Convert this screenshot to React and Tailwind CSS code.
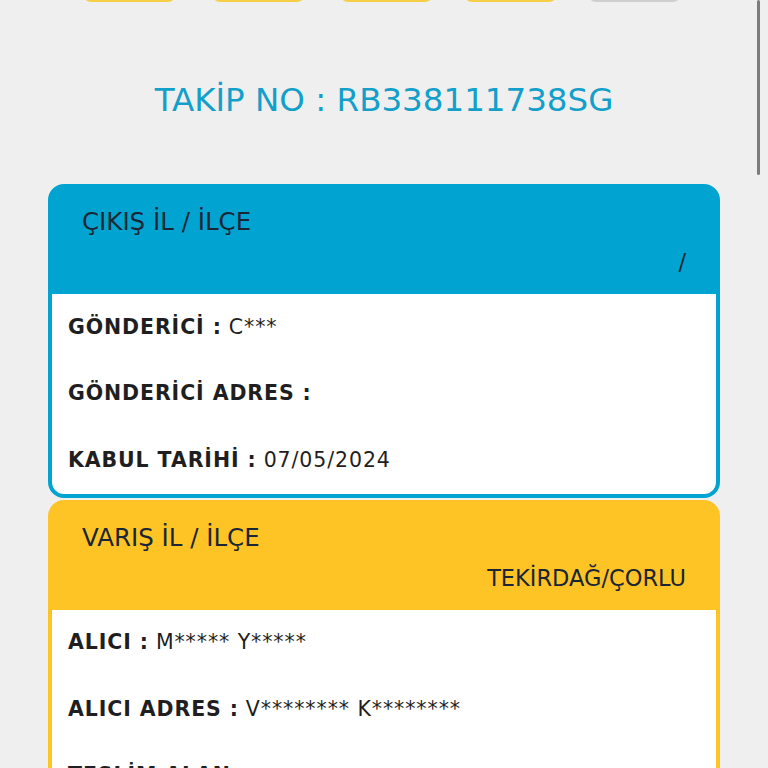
import React from "react";

const topButtons = [
  { ml: "ml-[83px]", color: "border-[#f7cf45] bg-[#f4f0e4]" },
  { ml: "ml-[36px]", color: "border-[#f7cf45] bg-[#f4f0e4]" },
  { ml: "ml-[35px]", color: "border-[#f7cf45] bg-[#f4f0e4]" },
  { ml: "ml-[31px]", color: "border-[#f7cf45] bg-[#f4f0e4]" },
  { ml: "ml-[31px]", color: "border-[#cfcfcf] bg-[#f2f2f2]" },
];

const Row = ({ label, value }) => (
  <div className="h-[66.5px] flex items-center pl-[16px] text-[20.5px] tracking-[0.9px] text-[#1f1f21]">
    <span className="font-bold">{label}</span>
    <span className="ml-[7px]">{value}</span>
  </div>
);

const Card = ({ title, place, rows, tone }) => (
  <div className={`mx-[48px] rounded-[16px] border-[4px] ${tone}`}>
    <div className="h-[106px] px-[30px] pt-[20px] text-[#1a2636]">
      <p className="text-[24.5px] leading-[28px]">{title}</p>
      <p className="mt-[12px] text-right text-[22.5px] leading-[28px]">{place}</p>
    </div>
    <div className="bg-white rounded-b-[12px]">
      {rows.map((r) => (
        <Row key={r.label} label={r.label} value={r.value} />
      ))}
    </div>
  </div>
);

export default function App() {
  return (
    <div className="relative w-full h-[768px] overflow-hidden bg-[#f0efef] font-['DejaVu_Sans','Liberation_Sans',sans-serif]">
      {/* top action buttons, scrolled mostly out of view */}
      <div className="flex -mt-[38px]">
        {topButtons.map((b, i) => (
          <div
            key={i}
            className={`${b.ml} w-[93px] h-[40px] rounded-[8px] border-[2px] ${b.color}`}
          />
        ))}
      </div>

      <h1 className="mt-[78px] text-center text-[32.5px] leading-[40px] text-[#12a0cb]">
        TAKİP NO : RB338111738SG
      </h1>

      <div className="mt-[64px]">
        <Card
          tone="border-[#01a4d0] bg-[#01a4d0]"
          title="ÇIKIŞ İL / İLÇE"
          place="/"
          rows={[
            { label: "GÖNDERİCİ :", value: "C***" },
            { label: "GÖNDERİCİ ADRES :", value: "" },
            { label: "KABUL TARİHİ :", value: "07/05/2024" },
          ]}
        />
        <div className="h-[2px]" />
        <Card
          tone="border-[#fec425] bg-[#fec425]"
          title="VARIŞ İL / İLÇE"
          place="TEKİRDAĞ/ÇORLU"
          rows={[
            { label: "ALICI :", value: "M***** Y*****" },
            { label: "ALICI ADRES :", value: "V******** K********" },
            { label: "TESLİM ALAN :", value: "" },
          ]}
        />
      </div>

      {/* scrollbar thumb */}
      <div className="absolute right-[8px] top-0 w-[3px] h-[175px] rounded-full bg-[#7c7c7c]" />
    </div>
  );
}
